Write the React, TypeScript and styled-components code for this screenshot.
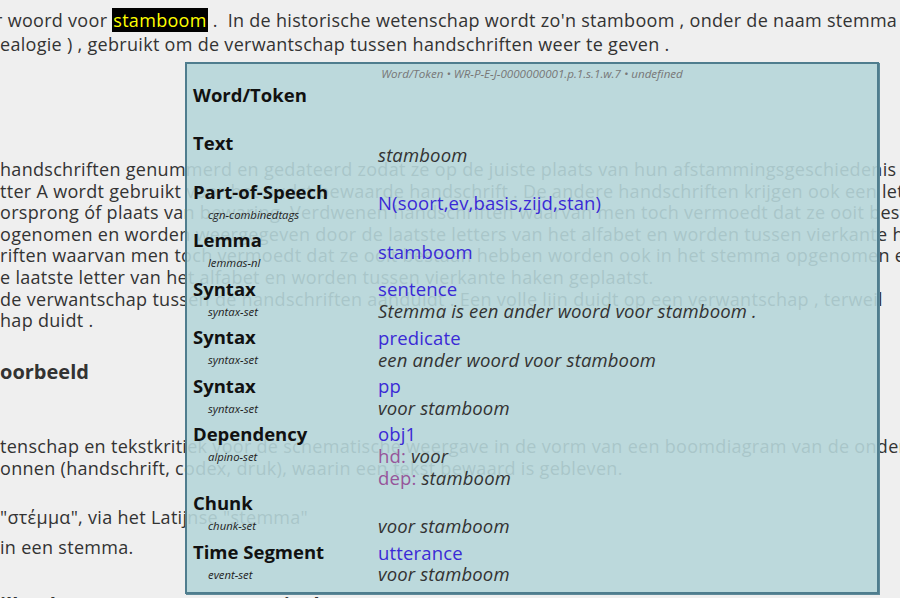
import React from 'react'
import styled, { createGlobalStyle } from 'styled-components'

const GlobalStyle = createGlobalStyle`
  html, body {
    margin: 0;
    padding: 0;
    background: #efefef;
    overflow: hidden;
  }
  body {
    font-family: "Open Sans", "Noto Sans", sans-serif;
    color: #333;
  }
`

const Page = styled.div`
  position: relative;
  width: 900px;
  height: 598px;
  overflow: hidden;
`

const Article = styled.div`
  padding-top: 8px;
  font-size: 18px;
  letter-spacing: 0.3px;
`

const Para = styled.p<{ $top: number; $lh: number; $indent?: number }>`
  margin: ${p => p.$top}px 0 0 0;
  line-height: ${p => p.$lh}px;
  text-indent: ${p => p.$indent ?? 0}px;
  white-space: nowrap;
`

const Heading = styled.h3<{ $top: number }>`
  margin: ${p => p.$top}px 0 0 0;
  font-size: 20px;
  line-height: 28px;
  font-weight: bold;
  letter-spacing: 0;
  white-space: nowrap;
`

const Mark = styled.span`
  background: #000;
  color: #ffff00;
  padding: 0 1px;
`

const Popup = styled.div`
  position: absolute;
  left: 185px;
  top: 62px;
  width: 690px;
  height: 528px;
  background: rgba(182, 214, 217, 0.9);
  border: 2px solid #4f7d8e;
  box-shadow: 1px 1px 0 #5f8a99;
  font-family: "Open Sans", "Noto Sans", sans-serif;
  letter-spacing: 0;
`

const Meta = styled.div`
  text-align: center;
  font-size: 11.6px;
  font-style: italic;
  color: #777;
  line-height: 16px;
  padding-top: 2px;
`

const Table = styled.table`
  border-collapse: collapse;
  margin-left: 6px;
  width: 680px;
`

const Label = styled.th`
  width: 185px;
  text-align: left;
  vertical-align: top;
  padding: 1.75px 0;
  font-weight: bold;
`

const LabelName = styled.div`
  font-size: 18.5px;
  line-height: 22px;
  color: #111;
`

const SetName = styled.div`
  font-size: 11.3px;
  font-weight: normal;
  font-style: italic;
  line-height: 23px;
  height: 23px;
  padding-left: 15px;
  color: #222;
`

const Value = styled.td`
  vertical-align: middle;
  padding: 1.75px 0;
  font-size: 18.5px;
  letter-spacing: 0.15px;
  line-height: 21.9px;
`

const ClassLine = styled.div`
  color: #3a2ad6;
  min-height: 21.9px;
`

const TextLine = styled.div`
  font-style: italic;
  color: #333;
`

const Role = styled.span`
  color: #96559a;
  font-style: normal;
`

type Row = {
  label: string
  set?: string
  cls?: string
  text?: string
  roles?: [string, string][]
  blankClass?: boolean
}

const rows: Row[] = [
  { label: 'Word/Token' },
  { label: 'Text', text: 'stamboom' },
  { label: 'Part-of-Speech', set: 'cgn-combinedtags', cls: 'N(soort,ev,basis,zijd,stan)' },
  { label: 'Lemma', set: 'lemmas-nl', cls: 'stamboom' },
  { label: 'Syntax', set: 'syntax-set', cls: 'sentence', text: 'Stemma is een ander woord voor stamboom .' },
  { label: 'Syntax', set: 'syntax-set', cls: 'predicate', text: 'een ander woord voor stamboom' },
  { label: 'Syntax', set: 'syntax-set', cls: 'pp', text: 'voor stamboom' },
  { label: 'Dependency', set: 'alpino-set', cls: 'obj1', roles: [['hd', 'voor'], ['dep', 'stamboom']] },
  { label: 'Chunk', set: 'chunk-set', blankClass: true, text: 'voor stamboom' },
  { label: 'Time Segment', set: 'event-set', cls: 'utterance', text: 'voor stamboom' },
]

function AnnotationRow({ row }: { row: Row }) {
  return (
    <tr>
      <Label>
        <LabelName>{row.label}</LabelName>
        <SetName>{row.set}</SetName>
      </Label>
      <Value>
        {(row.cls || row.blankClass) && <ClassLine>{row.cls}</ClassLine>}
        {row.text && <TextLine>{row.text}</TextLine>}
        {row.roles &&
          row.roles.map(([r, t]) => (
            <TextLine key={r}>
              <Role>{r}:</Role> {t}
            </TextLine>
          ))}
      </Value>
    </tr>
  )
}

export default function App() {
  return (
    <Page>
      <GlobalStyle />
      <Article>
        <Para $top={0} $lh={24} $indent={-5}>
          r woord voor <Mark>stamboom</Mark> .{'\u00a0'} In de historische wetenschap wordt zo'n stamboom , onder de naam stemma of gen
          <br />
          ealogie ) , gebruikt om de verwantschap tussen handschriften weer te geven .
        </Para>
        <Para $top={103} $lh={21.6}>
          handschriften genummerd en gedateerd zodat ze op de juiste plaats van hun afstammingsgeschiedenis kunnen
          <br />
          tter A wordt gebruikt voor het oudst bewaarde handschrift . De andere handschriften krijgen ook een letter die
          <br />
          orsprong óf plaats van bewaring. Verdwenen handschriften waarvan men toch vermoedt dat ze ooit bestaan hebben
          <br />
          ogenomen en worden weergegeven door de laatste letters van het alfabet en worden tussen vierkante haken
          <br />
          riften waarvan men toch vermoedt dat ze ooit bestaan hebben worden ook in het stemma opgenomen en
          <br />
          e laatste letter van het alfabet en worden tussen vierkante haken geplaatst.
          <br />
          de verwantschap tussen de handschriften aanduidt . Een volle lijn duidt op een verwantschap , terweil
          <br />
          hap duidt .
        </Para>
        <Heading $top={26}>oorbeeld</Heading>
        <Para $top={49} $lh={22}>
          tenschap en tekstkritiek voor de schematische weergave in de vorm van een boomdiagram van de onderlinge
          <br />
          onnen (handschrift, codex, druk), waarin een tekst bewaard is gebleven.
        </Para>
        <Para $top={27} $lh={22}>"στέμμα", via het Latijnse "stemma"</Para>
        <Para $top={8} $lh={22}>in een stemma.</Para>
        <Heading $top={33}>illende structuur en annotatieelementen</Heading>
      </Article>
      <Popup>
        <Meta>Word/Token • WR-P-E-J-0000000001.p.1.s.1.w.7 • undefined</Meta>
        <Table>
          <tbody>
            {rows.map((row, i) => (
              <AnnotationRow key={i} row={row} />
            ))}
          </tbody>
        </Table>
      </Popup>
    </Page>
  )
}
